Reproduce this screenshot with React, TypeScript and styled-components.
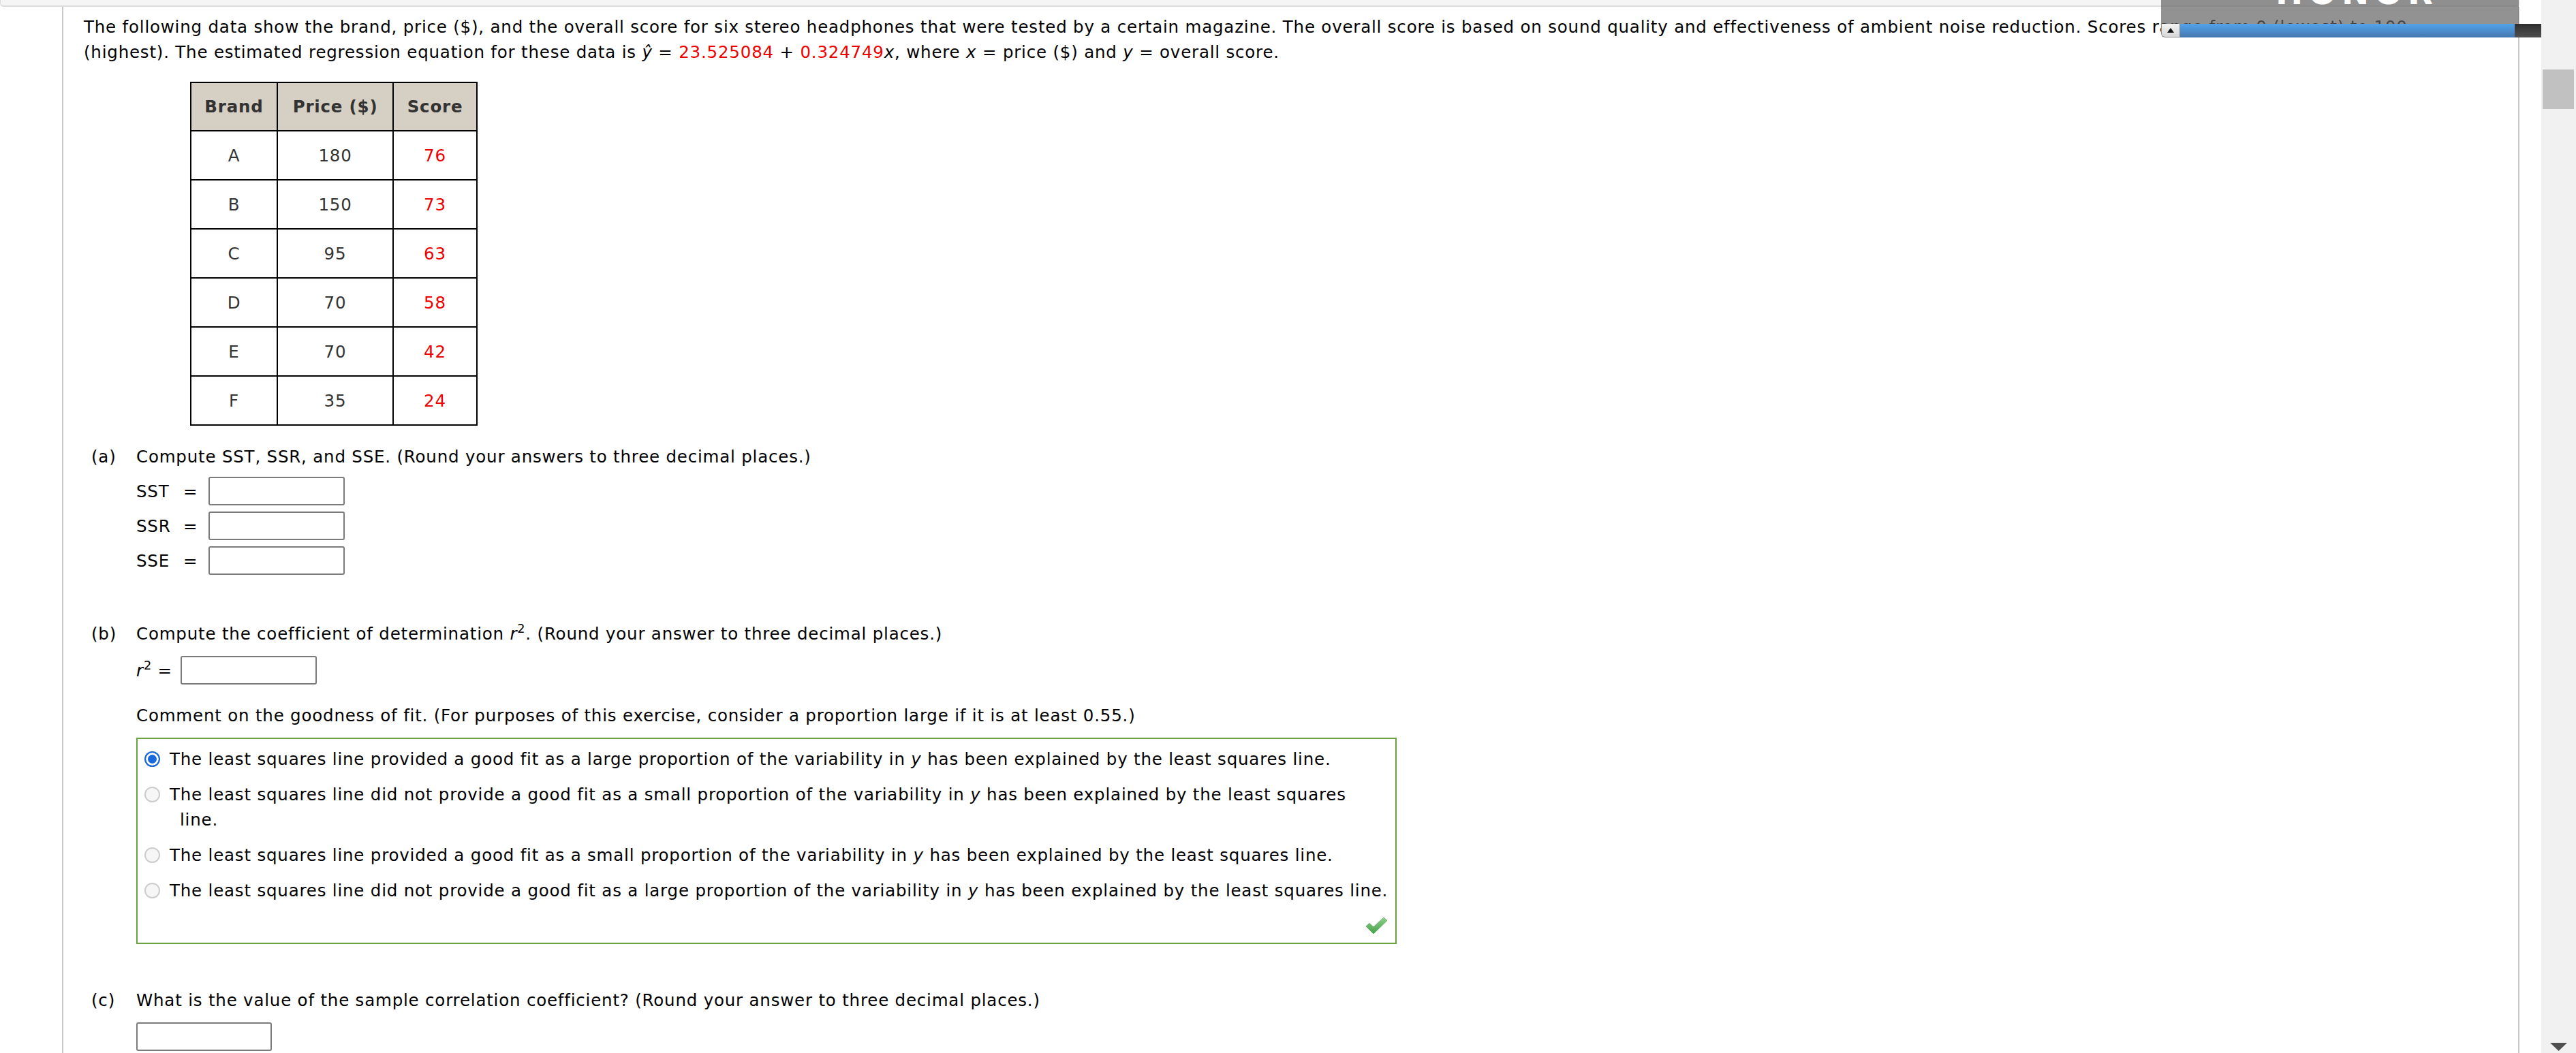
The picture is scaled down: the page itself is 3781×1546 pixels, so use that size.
import React from "react";
import styled, { createGlobalStyle } from "styled-components";

const GlobalStyle = createGlobalStyle`
  html, body {
    margin: 0;
    padding: 0;
    background: #fff;
  }
  body {
    font-family: "DejaVu Sans", Verdana, sans-serif;
    font-size: 24.5px;
    line-height: 37px;
    letter-spacing: 0.8px;
    color: #000;
    overflow: hidden;
  }
`;

const Page = styled.div`
  position: relative;
  display: flex;
  width: 3781px;
  height: 1546px;
  overflow: hidden;
`;

const Main = styled.div`
  width: 3698px;
  margin-right: 32px;
  display: flex;
  flex-direction: column;
`;

const TopBar = styled.div`
  height: 8px;
  background: #f5f5f5;
  border: 1px solid #dcdcdc;
  border-top: none;
  border-bottom-width: 2px;
  border-radius: 0 0 5px 5px;
`;

const Body = styled.div`
  flex: 1;
  display: flex;
`;

const Gutter = styled.div`
  width: 91px;
  flex-shrink: 0;
`;

const Panel = styled.div`
  flex: 1;
  border-left: 2px solid #c8c8c8;
  border-right: 2px solid #c8c8c8;
  padding: 11px 30px 0 30px;
`;

const Intro = styled.p`
  margin: 0;
`;

const Red = styled.span`
  color: #e00;
`;

const Var = styled.i`
  font-style: italic;
`;

const DataTable = styled.table`
  width: 420px;
  margin: 25px 0 0 156px;
  table-layout: fixed;
  border-collapse: collapse;
  border: 2px solid #000;
  color: #333;
`;

const HeadCell = styled.th`
  height: 69px;
  padding: 0;
  border: 2px solid #000;
  background: #d6d0c4;
  font-weight: bold;
  text-align: center;
`;

const Cell = styled.td<{ $red?: boolean }>`
  height: 70px;
  padding: 0;
  border: 2px solid #000;
  text-align: center;
  color: ${(p) => (p.$red ? "#e00" : "#333")};
`;

const PartHead = styled.div<{ $top: number }>`
  display: flex;
  padding-left: 11px;
  margin-top: ${(p) => p.$top}px;
`;

const PartLabel = styled.span`
  width: 66px;
  flex-shrink: 0;
`;

const Indent = styled.div`
  margin-left: 77px;
`;

const AnswerRow = styled.div<{ $top: number }>`
  display: flex;
  align-items: center;
  height: 42px;
  margin-top: ${(p) => p.$top}px;
`;

const AnswerName = styled.span`
  width: 69px;
`;

const Equals = styled.span`
  width: 37px;
`;

const Sup = styled.sup`
  font-size: 0.72em;
  line-height: 0;
  vertical-align: 0.55em;
`;

const Field = styled.input<{ $gap?: number; $w?: number }>`
  box-sizing: border-box;
  width: ${(p) => p.$w ?? 200}px;
  height: 42px;
  margin: 0 0 0 ${(p) => p.$gap ?? 0}px;
  border: 2px solid #7b7b7b;
  border-radius: 3px;
  background: #fff;
  font: inherit;
  padding: 0 6px;
`;

const Prompt = styled.div<{ $top: number }>`
  margin-top: ${(p) => p.$top}px;
`;

const ChoiceBox = styled.div`
  box-sizing: border-box;
  width: 1850px;
  margin-top: 14px;
  border: 2px solid #6aa23f;
  padding: 11px 9px 12px 8px;
`;

const Option = styled.div<{ $first?: boolean }>`
  display: flex;
  align-items: flex-start;
  margin-top: ${(p) => (p.$first ? 0 : 15)}px;
`;

const Radio = styled.span<{ $on?: boolean }>`
  box-sizing: border-box;
  flex-shrink: 0;
  width: 23px;
  height: 23px;
  margin: 7px 14px 0 2px;
  border-radius: 50%;
  border: 2px solid ${(p) => (p.$on ? "#1769dc" : "#cdcdcd")};
  background: ${(p) => (p.$on ? "#1769dc" : "#f6f6f6")};
  box-shadow: ${(p) => (p.$on ? "inset 0 0 0 3px #fff" : "none")};
`;

const OptionText = styled.span`
  padding-left: 15px;
  text-indent: -15px;
`;

const CheckRow = styled.div`
  display: flex;
  justify-content: flex-end;
  height: 26px;
  margin-top: 20px;
  padding-right: 2px;
`;

const Scrollbar = styled.div`
  width: 51px;
  flex-shrink: 0;
  display: flex;
  flex-direction: column;
  background: #f1f1f1;
`;

const Thumb = styled.div`
  height: 58px;
  margin: 102px 3px 0 2px;
  background: #c1c1c1;
`;

const Spacer = styled.div`
  flex: 1;
`;

const ArrowDown = styled.svg`
  display: block;
  margin: 0 auto 3px;
`;

const Widget = styled.div`
  position: absolute;
  top: 0;
  left: 3172px;
  width: 558px;
  display: flex;
  flex-direction: column;
`;

const Shade = styled.div`
  position: relative;
  width: 525px;
  height: 35px;
  overflow: hidden;
  background: rgba(100, 100, 100, 0.7);
`;

const Wordmark = styled.div`
  position: absolute;
  left: 168px;
  top: -35px;
  font-size: 48px;
  line-height: 48px;
  font-weight: bold;
  letter-spacing: 8px;
  color: #fff;
`;

const Strip = styled.div`
  display: flex;
  height: 20px;
`;

const UpButton = styled.div`
  width: 28px;
  display: flex;
  align-items: center;
  justify-content: center;
  background: linear-gradient(#f2f2f2, #d8d8d8);
  border: 1px solid #8a8a8a;
  border-top: none;
  border-radius: 0 0 0 6px;
  box-sizing: border-box;
`;

const BlueBar = styled.div`
  width: 491px;
  background: linear-gradient(#52a3ec, #4677ae);
`;

const DarkBar = styled.div`
  flex: 1;
  background: linear-gradient(#2f2f2f, #505050);
`;

const columns = [
  { key: "Brand", w: 127 },
  { key: "Price ($)", w: 170 },
  { key: "Score", w: 123 },
];

const rows: [string, number, number][] = [
  ["A", 180, 76],
  ["B", 150, 73],
  ["C", 95, 63],
  ["D", 70, 58],
  ["E", 70, 42],
  ["F", 35, 24],
];

const options = [
  { text: "provided a good fit as a large", on: true },
  { text: "did not provide a good fit as a small", on: false },
  { text: "provided a good fit as a small", on: false },
  { text: "did not provide a good fit as a large", on: false },
];

function CheckMark() {
  return (
    <svg width="33" height="26" viewBox="0 0 33 26">
      <defs>
        <linearGradient id="chk" x1="0" y1="0" x2="0" y2="1">
          <stop offset="0" stopColor="#8fd08a" />
          <stop offset="1" stopColor="#45a049" />
        </linearGradient>
      </defs>
      <path
        d="M1 14 L6 9.5 L12 15 L27 1 L32 5.5 L12 25 Z"
        fill="url(#chk)"
        stroke="#5aa85a"
        strokeWidth="0.8"
        strokeLinejoin="round"
      />
    </svg>
  );
}

export default function App() {
  return (
    <Page>
      <GlobalStyle />
      <Main>
        <TopBar />
        <Body>
          <Gutter />
          <Panel>
            <Intro>
              The following data show the brand, price ($), and the overall score for six stereo
              headphones that were tested by a certain magazine. The overall score is based on sound
              quality and effectiveness of ambient noise reduction. Scores range from 0 (lowest) to
              100 (highest). The estimated regression equation for these data is <Var>ŷ</Var> ={" "}
              <Red>23.525084</Red> + <Red>0.324749</Red>
              <Var>x</Var>, where <Var>x</Var> = price ($) and <Var>y</Var> = overall score.
            </Intro>

            <DataTable>
              <colgroup>
                {columns.map((c) => (
                  <col key={c.key} style={{ width: c.w }} />
                ))}
              </colgroup>
              <thead>
                <tr>
                  {columns.map((c) => (
                    <HeadCell key={c.key}>{c.key}</HeadCell>
                  ))}
                </tr>
              </thead>
              <tbody>
                {rows.map(([brand, price, score]) => (
                  <tr key={brand}>
                    <Cell>{brand}</Cell>
                    <Cell>{price}</Cell>
                    <Cell $red>{score}</Cell>
                  </tr>
                ))}
              </tbody>
            </DataTable>

            <PartHead $top={27}>
              <PartLabel>(a)</PartLabel>
              <span>Compute SST, SSR, and SSE. (Round your answers to three decimal places.)</span>
            </PartHead>
            <Indent>
              {["SST", "SSR", "SSE"].map((name, i) => (
                <AnswerRow key={name} $top={i === 0 ? 11 : 9}>
                  <AnswerName>{name}</AnswerName>
                  <Equals>=</Equals>
                  <Field type="text" />
                </AnswerRow>
              ))}
            </Indent>

            <PartHead $top={68}>
              <PartLabel>(b)</PartLabel>
              <span>
                Compute the coefficient of determination <Var>r</Var>
                <Sup>2</Sup>. (Round your answer to three decimal places.)
              </span>
            </PartHead>
            <Indent>
              <AnswerRow $top={14}>
                <span>
                  <Var>r</Var>
                  <Sup>2</Sup> =
                </span>
                <Field type="text" $gap={12} />
              </AnswerRow>
              <Prompt $top={27}>
                Comment on the goodness of fit. (For purposes of this exercise, consider a proportion
                large if it is at least 0.55.)
              </Prompt>
              <ChoiceBox>
                {options.map((o, i) => (
                  <Option key={o.text} $first={i === 0}>
                    <Radio $on={o.on} />
                    <OptionText>
                      The least squares line {o.text} proportion of the variability in <Var>y</Var>{" "}
                      has been explained by the least squares line.
                    </OptionText>
                  </Option>
                ))}
                <CheckRow>
                  <CheckMark />
                </CheckRow>
              </ChoiceBox>
            </Indent>

            <PartHead $top={64}>
              <PartLabel>(c)</PartLabel>
              <span>
                What is the value of the sample correlation coefficient? (Round your answer to three
                decimal places.)
              </span>
            </PartHead>
            <Indent>
              <AnswerRow $top={14}>
                <Field type="text" $w={199} />
              </AnswerRow>
            </Indent>
          </Panel>
        </Body>
      </Main>

      <Scrollbar>
        <Thumb />
        <Spacer />
        <ArrowDown width="25" height="12" viewBox="0 0 25 12">
          <path d="M0 0 H25 L12.5 12 Z" fill="#505050" />
        </ArrowDown>
      </Scrollbar>

      <Widget>
        <Shade>
          <Wordmark>HONOR</Wordmark>
        </Shade>
        <Strip>
          <UpButton>
            <svg width="10" height="7" viewBox="0 0 10 7">
              <path d="M0 7 L5 0 L10 7 Z" fill="#111" />
            </svg>
          </UpButton>
          <BlueBar />
          <DarkBar />
        </Strip>
      </Widget>
    </Page>
  );
}
